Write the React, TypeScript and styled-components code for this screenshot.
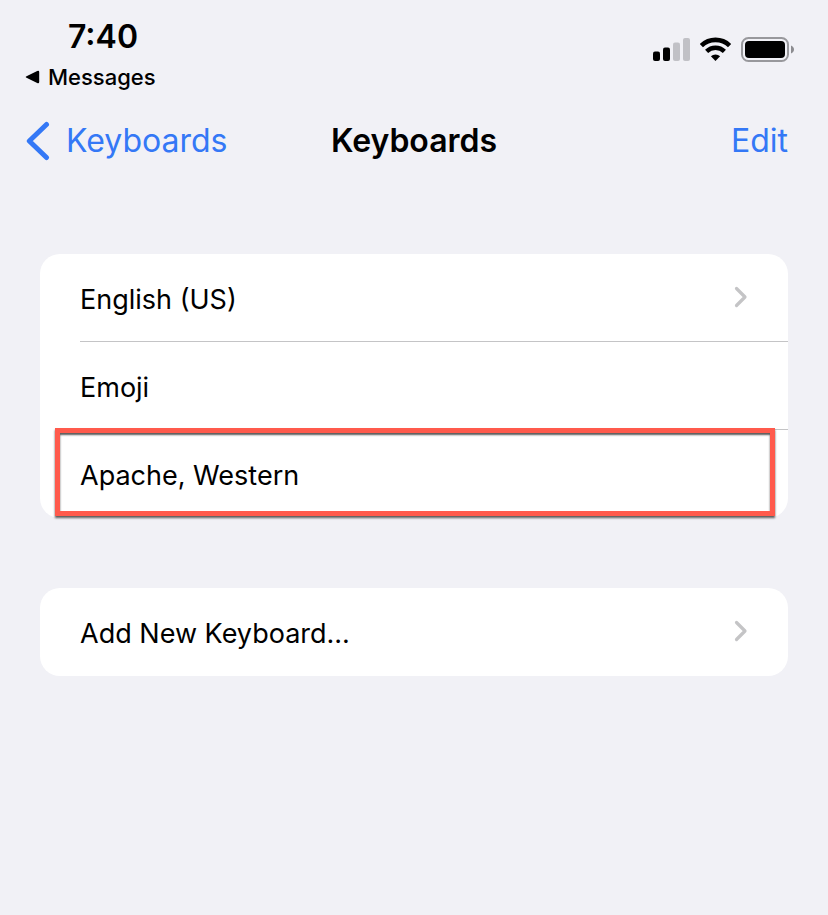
import React from "react";
import styled, { createGlobalStyle } from "styled-components";

const GlobalStyle = createGlobalStyle`
  * { box-sizing: border-box; }
  body {
    margin: 0;
    background: #f1f1f6;
    color: #000;
    font-family: Inter, "Liberation Sans", sans-serif;
  }
  button { font: inherit; }
`;

const Screen = styled.div`
  min-height: 100vh;
  background: #f1f1f6;
`;

const StatusBar = styled.header`
  display: flex;
  justify-content: space-between;
  align-items: flex-start;
  padding: 17px 32px 0 24px;
`;

const StatusLeft = styled.div`
  display: flex;
  flex-direction: column;
`;

const Time = styled.time`
  padding-left: 44px;
  font-size: 32px;
  font-weight: 600;
  line-height: 40px;
`;

const ReturnLink = styled.a`
  display: flex;
  align-items: center;
  gap: 8px;
  color: #000;
  text-decoration: none;
  font-size: 22px;
  font-weight: 500;
  line-height: 40px;
`;

const StatusIcons = styled.div`
  display: flex;
  align-items: center;
  gap: 8px;
  padding-top: 20px;
`;

const NavBar = styled.nav`
  display: grid;
  grid-template-columns: 1fr auto 1fr;
  align-items: center;
  height: 88px;
  padding: 0 24px;
`;

const NavSide = styled.div<{ $end?: boolean }>`
  display: flex;
  justify-content: ${(p) => (p.$end ? "flex-end" : "flex-start")};
  padding-right: ${(p) => (p.$end ? "16px" : "0")};
`;

const NavTitle = styled.h1`
  margin: 0;
  font-size: 32px;
  font-weight: 600;
  line-height: 40px;
`;

const NavButton = styled.button`
  display: flex;
  align-items: center;
  gap: 16px;
  padding: 0;
  border: 0;
  background: none;
  color: #3478f6;
  font-size: 32px;
  line-height: 40px;
  cursor: pointer;
`;

const Main = styled.main`
  display: flex;
  flex-direction: column;
  gap: 70px;
  padding: 69px 40px 40px;
`;

const Group = styled.ul`
  margin: 0;
  padding: 0;
  list-style: none;
  background: #fff;
  border-radius: 20px;
`;

const Item = styled.li`
  position: relative;
  height: 88px;
  padding-left: 40px;
`;

const Row = styled.button<{ $divided?: boolean }>`
  display: flex;
  align-items: center;
  justify-content: space-between;
  width: 100%;
  height: 100%;
  padding: 4px 40px 0 0;
  border: 0;
  border-bottom: ${(p) => (p.$divided ? "1px solid #c4c4c6" : "0")};
  background: none;
  color: #000;
  font-size: 27px;
  line-height: 40px;
  text-align: left;
  cursor: pointer;
`;

const Highlight = styled.span`
  position: absolute;
  inset: -2px 13px 2px 15px;
  border: 5px solid #ff5a4c;
  box-shadow: 0 2px 2px rgba(0, 0, 0, 0.65), inset 0 2px 2px rgba(0, 0, 0, 0.65);
  pointer-events: none;
`;

const SignalIcon = () => (
  <svg width="39" height="26" viewBox="0 0 39 26" aria-label="Signal, two bars">
    <rect x="0" y="14.5" width="7" height="9.5" rx="2" fill="#000" />
    <rect x="10" y="10.5" width="7" height="13.5" rx="2" fill="#000" />
    <rect x="20" y="5.5" width="7" height="18.5" rx="2" fill="#c1c1c6" />
    <rect x="30" y="1" width="7" height="23" rx="2" fill="#c1c1c6" />
  </svg>
);

const WifiIcon = () => (
  <svg width="33" height="26" viewBox="1 0 33 26" aria-label="Wi-Fi">
    <path d="M2.4 8.6a20.3 20.3 0 0 1 28.2 0" fill="none" stroke="#000" strokeWidth="4.6" />
    <path d="M7.6 14.3a12.8 12.8 0 0 1 17.8 0" fill="none" stroke="#000" strokeWidth="4.4" />
    <path d="M11.9 19.2a6.8 6.8 0 0 1 9.2 0L16.5 24Z" fill="#000" />
  </svg>
);

const BatteryIcon = () => (
  <svg width="55" height="26" viewBox="0 0 55 26" aria-label="Battery full">
    <rect x="1" y="1" width="46" height="23" rx="6.5" fill="none" stroke="#98989c" strokeWidth="2" />
    <rect x="4" y="4" width="40" height="17" rx="4" fill="#000" />
    <path d="M50 8.5c4 1.500 4 6.500 0 8Z" fill="#8c8c90" />
  </svg>
);

const ReturnIcon = () => (
  <svg width="16" height="14" viewBox="0 0 16 14" aria-hidden="true">
    <path d="M2.500 6.200 13.200.9q2-.8 2 1.200v9.800q0 2-2 1.200L2.500 7.800Q.700 7 2.500 6.200Z" fill="#000" />
  </svg>
);

const BackIcon = () => (
  <svg width="26" height="40" viewBox="0 0 26 40" aria-hidden="true">
    <path d="M22.500 3.500 5.300 20l17.200 16.500" fill="none" stroke="#3478f6" strokeWidth="5" strokeLinecap="round" strokeLinejoin="round" />
  </svg>
);

const Disclosure = styled.svg`
  margin-bottom: 6px;
`;

const DisclosureIcon = () => (
  <Disclosure width="14" height="22" viewBox="0 0 14 22" aria-hidden="true">
    <path d="M2.500 2.500 11 11l-8.500 8.500" fill="none" stroke="#c4c4c6" strokeWidth="3.200" strokeLinecap="round" strokeLinejoin="round" />
  </Disclosure>
);

type RowData = { label: string; disclosure?: boolean; highlighted?: boolean };

const groups: RowData[][] = [
  [
    { label: "English (US)", disclosure: true },
    { label: "Emoji" },
    { label: "Apache, Western", highlighted: true },
  ],
  [{ label: "Add New Keyboard...", disclosure: true }],
];

export default function App() {
  return (
    <Screen>
      <GlobalStyle />
      <StatusBar>
        <StatusLeft>
          <Time>7:40</Time>
          <ReturnLink href="#messages">
            <ReturnIcon />
            Messages
          </ReturnLink>
        </StatusLeft>
        <StatusIcons>
          <SignalIcon />
          <WifiIcon />
          <BatteryIcon />
        </StatusIcons>
      </StatusBar>
      <NavBar>
        <NavSide>
          <NavButton type="button">
            <BackIcon />
            Keyboards
          </NavButton>
        </NavSide>
        <NavTitle>Keyboards</NavTitle>
        <NavSide $end>
          <NavButton type="button">Edit</NavButton>
        </NavSide>
      </NavBar>
      <Main>
        {groups.map((rows) => (
          <Group key={rows[0].label}>
            {rows.map((row, i) => (
              <Item key={row.label}>
                <Row type="button" $divided={i < rows.length - 1}>
                  {row.label}
                  {row.disclosure && <DisclosureIcon />}
                </Row>
                {row.highlighted && <Highlight />}
              </Item>
            ))}
          </Group>
        ))}
      </Main>
    </Screen>
  );
}
